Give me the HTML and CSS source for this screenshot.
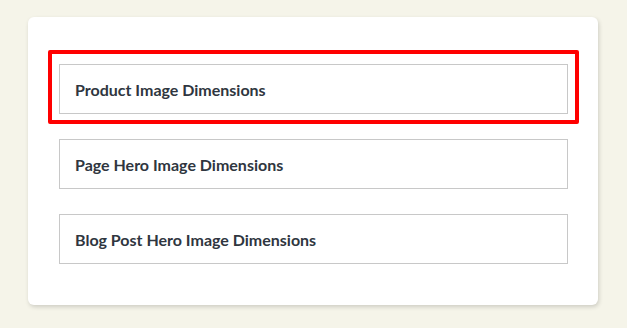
FILE: index.html
```html
<!DOCTYPE html>
<html lang="en">
<head>
  <meta charset="UTF-8">
  <title>Image Dimensions</title>
  <link rel="stylesheet" href="styles.css">
</head>
<body>

  <div class="card">
    <div class="item highlighted">Product Image Dimensions</div>
    <div class="item">Page Hero Image Dimensions</div>
    <div class="item">Blog Post Hero Image Dimensions</div>
  </div>

</body>
</html>
```

FILE: styles.css
```css
body {
  margin: 0;
  padding: 17px 29px 23px 28px;
  background-color: #f5f4e9;
  font-family: Lato, "Open Sans", sans-serif;
}
.card {
  background: #ffffff;
  border-radius: 6px;
  padding: 47px 30px 41px 31px;
  box-shadow: 1px 2px 4px rgba(0, 0, 0, 0.16);
  display: flex;
  flex-direction: column;
  gap: 25px;
}
.item {
  position: relative;
  height: 48px;
  display: flex;
  align-items: center;
  padding: 0 15px;
  border: 1px solid #c8c8c8;
  font-size: 16px;
  font-weight: 700;
  color: #2f3640;
}
.highlighted::after {
  content: "";
  position: absolute;
  top: -15px;
  left: -12px;
  right: -12px;
  bottom: -11px;
  border: 4px solid #ff0000;
  border-radius: 2px;
}
```
